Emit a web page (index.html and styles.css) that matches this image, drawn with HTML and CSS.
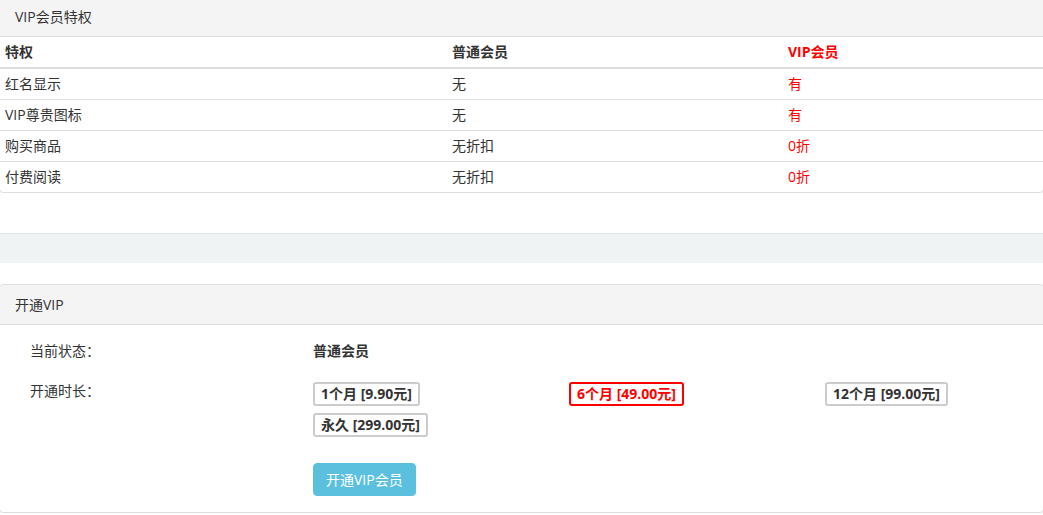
FILE: index.html
```html
<!DOCTYPE html>
<html lang="zh-CN">
<head>
    <meta charset="UTF-8">
    <meta name="viewport" content="width=device-width, initial-scale=1.0">
    <title>VIP会员</title>
    <link rel="stylesheet" href="styles.css">
</head>
<body>
    <div class="page">
        <!-- 会员特权 -->
        <div class="panel panel-first">
            <div class="panel-heading">VIP会员特权</div>
            <table class="priv-table">
                <thead>
                    <tr>
                        <th class="col-name">特权</th>
                        <th class="col-normal">普通会员</th>
                        <th class="vip">VIP会员</th>
                    </tr>
                </thead>
                <tbody>
                    <tr><td>红名显示</td><td>无</td><td class="vip">有</td></tr>
                    <tr><td>VIP尊贵图标</td><td>无</td><td class="vip">有</td></tr>
                    <tr><td>购买商品</td><td>无折扣</td><td class="vip">0折</td></tr>
                    <tr><td>付费阅读</td><td>无折扣</td><td class="vip">0折</td></tr>
                </tbody>
            </table>
        </div>

        <div class="band"></div>

        <!-- 开通VIP -->
        <div class="panel">
            <div class="panel-heading">开通VIP</div>
            <div class="panel-body">
                <div class="form-row">
                    <div class="form-label">当前状态：</div>
                    <div class="form-value"><strong>普通会员</strong></div>
                </div>
                <div class="form-row">
                    <div class="form-label">开通时长：</div>
                    <div class="form-value">
                        <div class="options">
                            <div class="option-cell"><span class="option">1个月 [9.90元]</span></div>
                            <div class="option-cell"><span class="option active">6个月 [49.00元]</span></div>
                            <div class="option-cell"><span class="option">12个月 [99.00元]</span></div>
                            <div class="option-cell"><span class="option">永久 [299.00元]</span></div>
                        </div>
                    </div>
                </div>
                <div class="form-row form-submit">
                    <div class="form-label"></div>
                    <div class="form-value">
                        <button class="btn-info">开通VIP会员</button>
                    </div>
                </div>
            </div>
        </div>
    </div>
</body>
</html>
```

FILE: styles.css
```css
body {
    margin: 0;
    font-family: "Open Sans", "Noto Sans CJK SC", sans-serif;
    font-size: 14px;
    line-height: 20px;
    color: #333;
    background: #fff;
}

.page {
    margin-top: -4px;
}

.panel {
    border: 1px solid #ddd;
    border-radius: 4px;
    background: #fff;
    margin-left: -1px;
    margin-right: -1px;
}

.panel-heading {
    background: #f4f4f4;
    border-bottom: 1px solid #ddd;
    padding: 10px 15px 9px;
    line-height: 20px;
    border-radius: 4px 4px 0 0;
}

.priv-table {
    width: 100%;
    border-collapse: collapse;
}

.priv-table th,
.priv-table td {
    padding: 5px;
    line-height: 20px;
    text-align: left;
    border-top: 1px solid #ddd;
}

.priv-table thead th {
    border-top: 0;
    border-bottom: 2px solid #ddd;
    font-weight: bold;
}

.priv-table tbody tr:first-child td {
    border-top: 0;
}

.priv-table .col-name {
    width: 437px;
}

.priv-table .col-normal {
    width: 326px;
}

.vip {
    color: #f00;
}

.band {
    margin: 40px 0 21px;
    height: 29px;
    background: #f0f3f4;
    border-top: 1px solid #e1e4e5;
}

.panel-body {
    padding: 16px 0 16px 15px;
}

.form-row {
    display: flex;
    margin-bottom: 20px;
}

.form-row.form-submit {
    margin-bottom: 0;
    margin-top: 26px;
}

.form-label {
    width: 283px;
    padding-left: 15px;
    flex-shrink: 0;
}

.form-value {
    flex: 1;
}

.options {
    display: grid;
    grid-template-columns: repeat(3, 256px);
    row-gap: 7px;
    padding-top: 1px;
}

.option {
    display: inline-block;
    border: 2px solid #ccc;
    border-radius: 3px;
    padding: 1px 6px;
    line-height: 18px;
    font-weight: bold;
}

.option.active {
    border-color: #f00;
    color: #f00;
}

.btn-info {
    font-family: inherit;
    font-size: 14px;
    line-height: 19px;
    color: #fff;
    background: #5bc0de;
    border: 1px solid #5bc0de;
    border-radius: 4px;
    padding: 6px 12px;
    cursor: pointer;
}
```
